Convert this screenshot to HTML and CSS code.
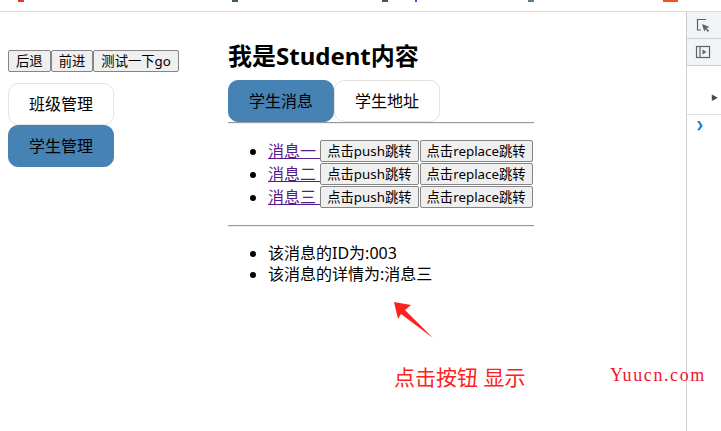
FILE: index.html
```html
<!DOCTYPE html>
<html lang="zh-CN">
<head>
    <meta charset="UTF-8">
    <title>Student</title>
    <link rel="stylesheet" href="styles.css">
</head>
<body>
    <div class="browser-bar">
        <span class="tab-icon red"></span>
        <span class="tab-icon dark"></span>
        <span class="tab-icon dark"></span>
        <span class="tab-icon purple"></span>
        <span class="tab-icon gray"></span>
        <span class="tab-icon orange"></span>
    </div>

    <div class="window">
        <div class="page">
            <div class="app">
                <div class="side">
                    <div class="history-btns"><button class="btn">后退</button><button class="btn">前进</button><button class="btn">测试一下go</button></div>
                    <a class="nav-item">班级管理</a>
                    <a class="nav-item active">学生管理</a>
                </div>

                <div class="main">
                    <h2 class="title">我是Student内容</h2>
                    <div class="tabs">
                        <a class="tab active">学生消息</a>
                        <a class="tab">学生地址</a>
                    </div>
                    <hr class="line">
                    <ul class="msg-list">
                        <li><a href="#" class="msg-link">消息一 </a><button class="btn">点击push跳转</button><button class="btn">点击replace跳转</button></li>
                        <li><a href="#" class="msg-link">消息二 </a><button class="btn">点击push跳转</button><button class="btn">点击replace跳转</button></li>
                        <li><a href="#" class="msg-link">消息三 </a><button class="btn">点击push跳转</button><button class="btn">点击replace跳转</button></li>
                    </ul>
                    <hr class="line">
                    <ul class="detail-list">
                        <li>该消息的ID为:003</li>
                        <li>该消息的详情为:消息三</li>
                    </ul>
                </div>
            </div>

            <!-- annotation drawn on top of the screenshot -->
            <svg class="arrow" width="48" height="44" viewBox="0 0 48 44">
                <polygon points="4,4 21,7 15,12 43,40 11,16 8,21" fill="#ff1f1f"/>
            </svg>
            <div class="note">点击按钮 显示</div>
            <div class="watermark">Yuucn.com</div>
        </div>

        <div class="devtools">
            <div class="dt-btn">
                <svg width="16" height="16" viewBox="0 0 16 16">
                    <path d="M11 2.5H2.5V13H6" fill="none" stroke="#5f6368" stroke-width="1.2"/>
                    <path d="M7 7l7.5 3-3 1.2 2.6 2.6-1.1 1.1-2.6-2.6L9.2 14.5z" fill="#5f6368"/>
                </svg>
            </div>
            <div class="dt-btn">
                <svg width="16" height="16" viewBox="0 0 16 16">
                    <rect x="1.5" y="2.5" width="13" height="11" fill="none" stroke="#5f6368" stroke-width="1.2"/>
                    <path d="M5 2.5v11" stroke="#5f6368" stroke-width="1.2"/>
                    <path d="M7.5 5.5l4 2.5-4 2.5z" fill="#5f6368"/>
                </svg>
            </div>
            <div class="dt-body">
                <div class="dt-more">&#9654;</div>
            </div>
            <div class="dt-console">&#10095;</div>
        </div>
    </div>
</body>
</html>
```

FILE: styles.css
```css
body {
    margin: 0;
    width: 721px;
    height: 431px;
    overflow: hidden;
    background: #fff;
    color: #000;
    font-family: "Noto Sans", "Noto Sans CJK SC", sans-serif;
}

/* cut off strip of the browser tabs */
.browser-bar {
    height: 11px;
    border-bottom: 1px solid #dadce0;
    position: relative;
}

.tab-icon {
    position: absolute;
    top: 0;
    width: 6px;
    height: 2px;
}
.tab-icon.red { left: 18px; background: #e33; }
.tab-icon.dark { left: 232px; background: #3c5a66; }
.tab-icon.dark + .dark { left: 382px; }
.tab-icon.purple { left: 415px; width: 2px; background: #8a2be2; }
.tab-icon.gray { left: 528px; background: #5b7a90; }
.tab-icon.orange { left: 663px; width: 15px; background: #f4511e; }

.window {
    display: flex;
    height: 419px;
}

.page {
    flex: 1;
    position: relative;
    padding: 8px;
}

.app {
    display: flex;
    align-items: flex-start;
}

/* left column */
.side {
    width: 106px;
    margin-top: 30px;
}

.history-btns {
    display: flex;
    white-space: nowrap;
    margin-bottom: 11px;
}

.history-btns .btn {
    margin: 0;
    padding: 0 7px;
}

.btn {
    height: 22px;
    margin: 0 1px 0 0;
    padding: 0 6px;
    font-family: inherit;
    font-size: 13.33px;
    line-height: 20px;
    color: #000;
    background: #efefef;
    border: 1px solid #858585;
    border-radius: 2px;
    vertical-align: top;
}

.nav-item,
.tab {
    display: block;
    box-sizing: border-box;
    width: 106px;
    padding: 10px 0;
    font-size: 16px;
    line-height: 20px;
    text-align: center;
    color: #000;
    background: #fff;
    border: 1px solid #e3e3e3;
    border-radius: 10px;
}

.nav-item.active,
.tab.active {
    background: steelblue;
    border-color: steelblue;
}

/* right column */
.main {
    margin-left: 114px;
}

.title {
    margin: 20px 0 8px;
    font-size: 24px;
    line-height: 32px;
}

.tabs {
    display: flex;
}

.line {
    height: 0;
    margin: 0;
    border: none;
    border-top: 1px solid #9a9a9a;
    border-bottom: 1px solid #eeeeee;
}

.msg-list,
.detail-list {
    margin: 16px 0;
    padding-left: 40px;
    font-size: 16px;
}

.msg-list li {
    height: 23px;
    line-height: 22px;
    white-space: nowrap;
}

.msg-link {
    color: #551a8b;
    vertical-align: top;
}

.detail-list li {
    line-height: 21px;
}

/* annotation */
.arrow {
    position: absolute;
    left: 390px;
    top: 286px;
}

.note {
    position: absolute;
    left: 394px;
    top: 351px;
    font-size: 21px;
    line-height: 28px;
    color: #ff2020;
}

.watermark {
    position: absolute;
    left: 610px;
    top: 353px;
    font-family: "Liberation Serif", serif;
    font-size: 18px;
    line-height: 20px;
    letter-spacing: 1.6px;
    color: #f0142d;
}

/* devtools side panel */
.devtools {
    width: 34px;
    border-left: 1px solid #cbcdd1;
    display: flex;
    flex-direction: column;
}

.dt-btn {
    height: 26px;
    background: #f1f3f4;
    border-bottom: 1px solid #cacdd1;
    display: flex;
    align-items: center;
    padding-left: 8px;
}

.dt-body {
    height: 48px;
    border-bottom: 1px solid #e0e0e0;
    position: relative;
}

.dt-more {
    position: absolute;
    right: 3px;
    top: 26px;
    font-size: 7px;
    color: #444;
}

.dt-console {
    padding: 3px 0 0 9px;
    font-size: 9px;
    font-weight: bold;
    color: #1a73e8;
}
```
